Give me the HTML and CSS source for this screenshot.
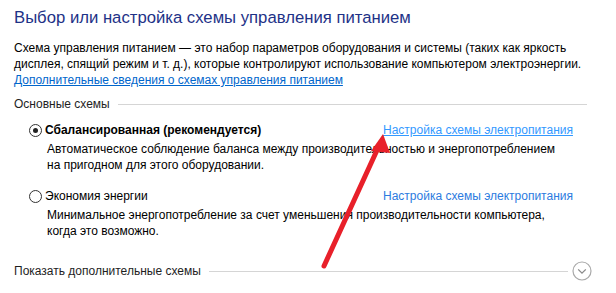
FILE: index.html
```html
<!DOCTYPE html>
<html lang="ru">
<head>
<meta charset="utf-8">
<title>Электропитание</title>
<link rel="stylesheet" href="styles.css">
</head>
<body>
<div class="page">
  <h1 class="title">Выбор или настройка схемы управления питанием</h1>
  <p class="intro">Схема управления питанием — это набор параметров оборудования и системы (таких как яркость<br>дисплея, спящий режим и т. д.), которые контролируют использование компьютером электроэнергии.</p>
  <a class="more" href="#">Дополнительные сведения о схемах управления питанием</a>

  <div class="group">
    <span class="group-label">Основные схемы</span>
    <span class="group-line"></span>
  </div>

  <div class="plan">
    <div class="plan-head">
      <label class="plan-name bold"><span class="radio checked"></span>Сбалансированная (рекомендуется)</label>
      <a class="plan-link hover" href="#">Настройка схемы электропитания</a>
    </div>
    <p class="plan-desc">Автоматическое соблюдение баланса между производительностью и энергопотреблением<br>на пригодном для этого оборудовании.</p>
  </div>

  <div class="plan second">
    <div class="plan-head">
      <label class="plan-name"><span class="radio"></span>Экономия энергии</label>
      <a class="plan-link" href="#">Настройка схемы электропитания</a>
    </div>
    <p class="plan-desc">Минимальное энергопотребление за счет уменьшения производительности компьютера,<br>когда это возможно.</p>
  </div>

  <div class="group extra">
    <span class="group-label">Показать дополнительные схемы</span>
    <span class="group-line"></span>
    <svg class="expand" width="20" height="20" viewBox="0 0 20 20"><circle cx="10" cy="10" r="9" fill="#fff" stroke="#a9a9a9" stroke-width="1.2"/><path d="M6.2 8.4 L10 12.2 L13.8 8.4" fill="none" stroke="#8a8a8a" stroke-width="1.3"/></svg>
  </div>
</div>
<svg class="arrow" width="616" height="293" viewBox="0 0 616 293">
  <line x1="324" y1="266" x2="378" y2="148" stroke="#e8202a" stroke-width="5" stroke-linecap="round"/>
  <polygon points="383,134 390,153 371,151" fill="#e8202a"/>
</svg>
</body>
</html>
```
FILE: styles.css
```css
html, body {
  margin: 0;
  padding: 0;
  background: #ffffff;
}
body {
  font-family: "Liberation Sans", Arial, sans-serif;
  font-size: 12px;
  color: #000;
  position: relative;
  width: 616px;
  height: 293px;
  overflow: hidden;
}
.page {
  padding: 7px 24px 0 14px;
  white-space: nowrap;
}
.title {
  margin: 0;
  font-weight: 400;
  font-size: 16.7px;
  line-height: 22px;
  color: #1e3287;
}
.intro {
  margin: 11px 0 0;
  line-height: 16px;
}
.more {
  display: block;
  line-height: 16px;
  color: #0066cc;
  text-decoration: underline;
}
.group {
  display: flex;
  align-items: center;
  margin-top: 8px;
  margin-right: 5px;
  line-height: 16px;
  color: #1e1e1e;
}
.group-line {
  flex: 1;
  height: 1px;
  background: #d5d5d5;
  margin-left: 8px;
}
.plan {
  padding-left: 15px;
  margin-top: 10px;
}
.plan.second {
  margin-top: 15px;
}
.plan-head {
  display: grid;
  grid-template-columns: 354px auto;
  line-height: 16px;
}
.plan-name {
  display: flex;
  align-items: center;
}
.bold {
  font-weight: 700;
}
.radio {
  width: 11px;
  height: 11px;
  border: 1px solid #333;
  border-radius: 50%;
  margin-right: 3px;
  position: relative;
  flex: none;
  box-sizing: content-box;
}
.radio.checked::after {
  content: "";
  position: absolute;
  left: 3px;
  top: 3px;
  width: 5px;
  height: 5px;
  border-radius: 50%;
  background: #222;
}
.plan-link {
  color: #2c7be0;
  text-decoration: none;
}
.plan-link.hover {
  color: #3399ff;
  text-decoration: underline;
}
.plan-desc {
  margin: 3px 0 0 18px;
  line-height: 16px;
}
.extra {
  margin-top: 22px;
  margin-right: 0;
}
.extra .group-line {
  margin-right: 4px;
}
.expand {
  flex: none;
}
.arrow {
  position: absolute;
  left: 0;
  top: 0;
  pointer-events: none;
}
```
